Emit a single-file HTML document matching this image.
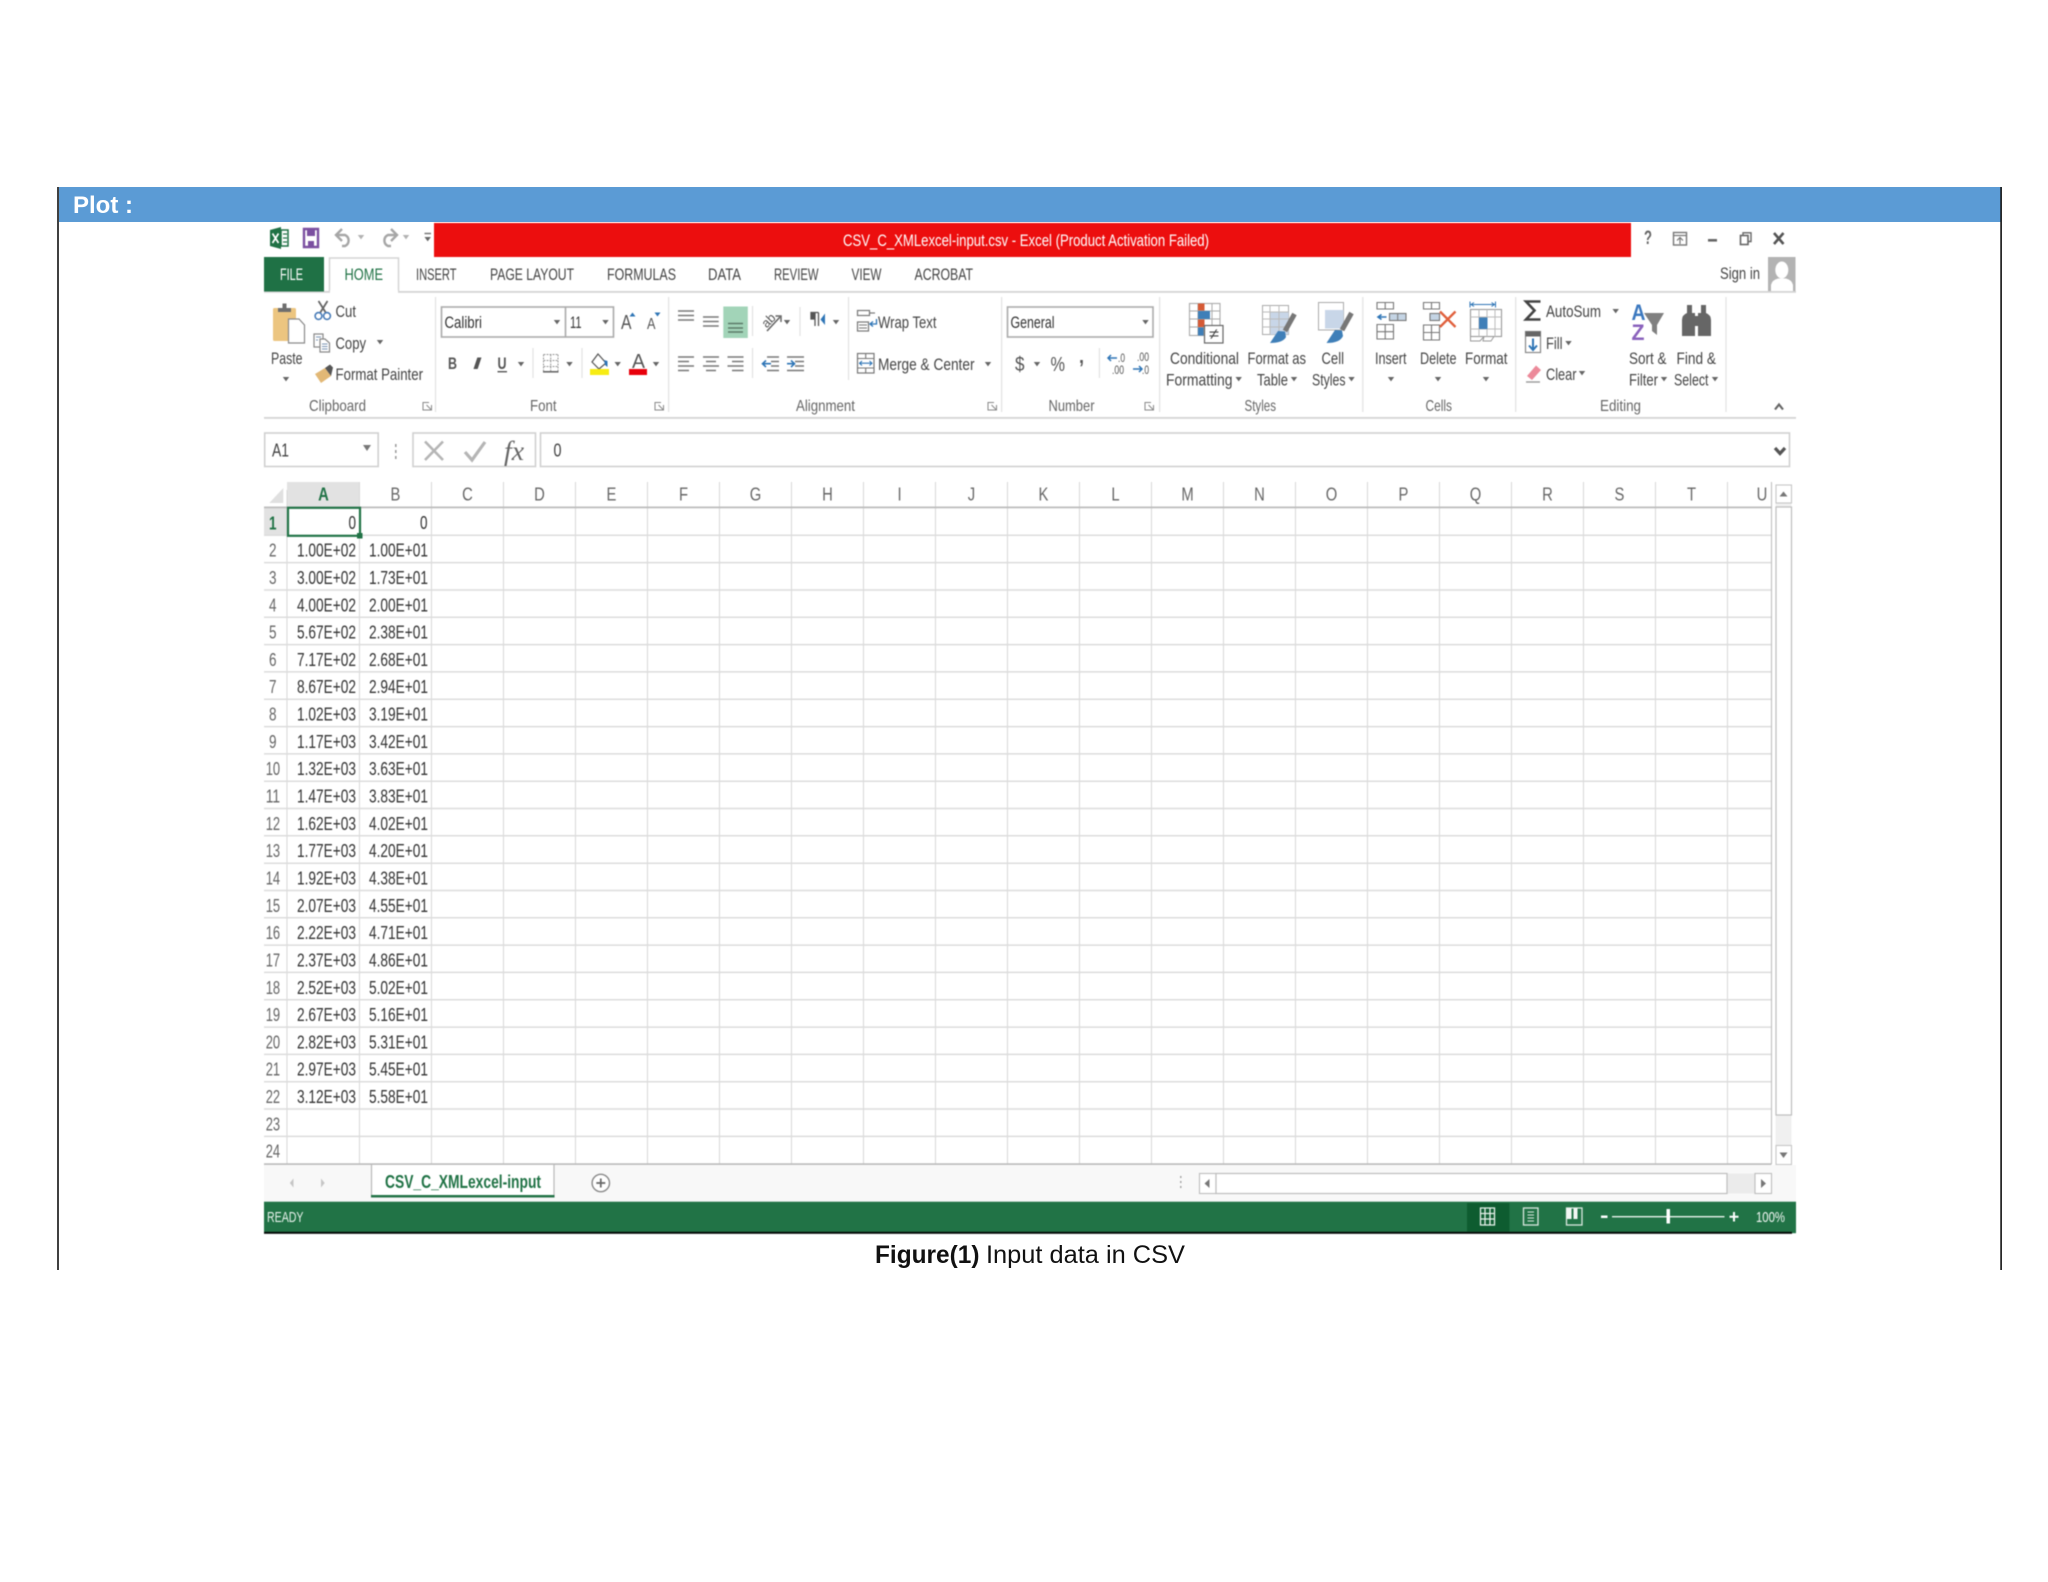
<!DOCTYPE html>
<html lang="en">
<head>
<meta charset="utf-8">
<title>Plot - Input data in CSV</title>
<style>
html,body{margin:0;padding:0;background:#fff}
svg{display:block}
text{font-family:"Liberation Sans",sans-serif;fill:#444}
.t{font-size:17px}
.g{font-size:16px;fill:#666}
.c{font-size:18.5px;fill:#333}
.r{font-size:18px;fill:#666}
.h{font-size:18.5px;fill:#666;text-anchor:middle}
.ln{fill:none;stroke:#777;stroke-width:1.6}
.bx{fill:#fff;stroke:#8c8c8c;stroke-width:1.5}
</style>
</head>
<body>
<svg xmlns="http://www.w3.org/2000/svg" width="2048" height="1582" viewBox="0 0 2048 1582">
<defs>
<path id="da" d="M-3.2-2H3.2L0 2.4Z" fill="#666"/>
</defs>
<rect width="2048" height="1582" fill="#fff"/>
<rect x="59" y="187" width="1942" height="35" fill="#5b9bd5"/>
<rect x="57.2" y="187" width="1.6" height="1083" fill="#111"/>
<rect x="2000.3" y="187" width="1.6" height="1083" fill="#111"/>
<text x="73" y="213" textLength="60" lengthAdjust="spacingAndGlyphs" style="font-size:24px;font-weight:bold;fill:#fff">Plot :</text>

<g style="filter:blur(.45px)">
<!-- title bar -->
<rect x="434" y="223" width="1197" height="34" fill="#ec0e0e"/>
<text x="843" y="246" textLength="366" lengthAdjust="spacingAndGlyphs" style="font-size:17px;fill:#fff">CSV_C_XMLexcel-input.csv - Excel (Product Activation Failed)</text>
<!-- excel icon -->
<path d="M270 230 281 227V249L270 246Z" fill="#1f7145"/>
<path d="M281 230H288V246H281Z" fill="#fff" stroke="#1f7145" stroke-width="1.5"/>
<path d="M283 234H287M283 238H287M283 242H287" stroke="#1f7145" stroke-width="1.2"/>
<path d="M272.5 233.5 278.5 243M278.5 233.5 272.5 243" stroke="#fff" stroke-width="1.7"/>
<!-- save -->
<path d="M304 229H318V247H304Z" fill="#fff" stroke="#7b4fa0" stroke-width="2.4"/>
<rect x="307" y="229" width="8" height="7" fill="#7b4fa0"/>
<rect x="308" y="241" width="6" height="6" fill="#7b4fa0"/>
<!-- undo/redo -->
<path d="M337 235H345A6 6 0 0 1 345 246H342" fill="none" stroke="#a6a6a6" stroke-width="2.4"/>
<path d="M342 229 336 235 342 241" fill="none" stroke="#a6a6a6" stroke-width="2.4"/>
<use href="#da" x="361" y="237" opacity=".5"/>
<path d="M396 235H388A6 6 0 0 0 388 246H391" fill="none" stroke="#a6a6a6" stroke-width="2.4"/>
<path d="M391 229 397 235 391 241" fill="none" stroke="#a6a6a6" stroke-width="2.4"/>
<use href="#da" x="406" y="237" opacity=".5"/>
<path d="M424.5 233.5H431" stroke="#777" stroke-width="1.5"/>
<use href="#da" x="427.7" y="239"/>
<!-- window controls -->
<text x="1644" y="244" textLength="8" lengthAdjust="spacingAndGlyphs" style="font-size:19px;font-weight:bold;fill:#666">?</text>
<rect x="1673.5" y="232.5" width="13" height="12.5" fill="none" stroke="#777" stroke-width="1.4"/>
<path d="M1673.5 235.5H1686.5M1680 244V238M1677 240.5 1680 237.5 1683 240.5" fill="none" stroke="#777" stroke-width="1.2"/>
<rect x="1708" y="239" width="9" height="2.6" fill="#666"/>
<path d="M1743 235V232.8H1751V241.5H1748" fill="none" stroke="#666" stroke-width="1.4"/>
<rect x="1740.5" y="235.5" width="7.5" height="9" fill="#fff" stroke="#666" stroke-width="1.6"/>
<path d="M1774 233 1783.5 244M1783.5 233 1774 244" stroke="#555" stroke-width="2.6"/>

<!-- tabs -->
<rect x="264" y="291" width="1532" height="1.8" fill="#d4d4d4"/>
<rect x="264" y="257" width="60" height="34.5" fill="#1f7145"/>
<path d="M329.5 292V258H398.5V292" fill="#fff" stroke="#d4d4d4" stroke-width="1.5"/>
<rect x="330" y="290" width="68" height="3" fill="#fff"/>
<text class="t" x="280" y="280" textLength="23" lengthAdjust="spacingAndGlyphs" style="fill:#fff">FILE</text>
<text class="t" x="344.5" y="280" textLength="38.5" lengthAdjust="spacingAndGlyphs" style="fill:#217346">HOME</text>
<text class="t" x="416" y="280" textLength="40.5" lengthAdjust="spacingAndGlyphs">INSERT</text>
<text class="t" x="490" y="280" textLength="84" lengthAdjust="spacingAndGlyphs">PAGE LAYOUT</text>
<text class="t" x="607" y="280" textLength="69" lengthAdjust="spacingAndGlyphs">FORMULAS</text>
<text class="t" x="708" y="280" textLength="33" lengthAdjust="spacingAndGlyphs">DATA</text>
<text class="t" x="774" y="280" textLength="44.5" lengthAdjust="spacingAndGlyphs">REVIEW</text>
<text class="t" x="851.5" y="280" textLength="30" lengthAdjust="spacingAndGlyphs">VIEW</text>
<text class="t" x="914.5" y="280" textLength="58.5" lengthAdjust="spacingAndGlyphs">ACROBAT</text>
<text class="t" x="1720" y="279" textLength="40" lengthAdjust="spacingAndGlyphs">Sign in</text>
<rect x="1768" y="257" width="27.5" height="34" fill="#b3b3b3"/>
<ellipse cx="1781.8" cy="270" rx="6.5" ry="8.5" fill="#fff"/>
<path d="M1771 291V285Q1772 280 1778 278.5H1786Q1792 280 1793 285V291Z" fill="#fff"/>

<!-- ribbon separators -->
<path d="M435.5 297V412M668.6 297V412M1001.6 297V412M1159.6 297V412M1362.8 297V412M1515.7 297V412M1726 297V412" stroke="#e2e2e2" stroke-width="1.2"/>
<path d="M533 348V378M582 348V378M752.5 348V378M752.5 306V336M800 307V336M848.5 297V380M1099.4 348V378" stroke="#e2e2e2" stroke-width="1.2"/>
<rect x="264" y="417" width="1532" height="1.8" fill="#d4d4d4"/>

<!-- clipboard -->
<rect x="273" y="308" width="23" height="33" rx="1.5" fill="#ecc580"/>
<path d="M278 312V308H282.5V303.5H286.5V308H291V312Z" fill="#6e6e6e"/>
<path d="M288.5 319H299L304.5 325V343H288.5Z" fill="#fff" stroke="#8a8a8a" stroke-width="1.2"/>
<text class="t" x="271" y="364" textLength="31.5" lengthAdjust="spacingAndGlyphs">Paste</text>
<use href="#da" x="286" y="379"/>
<path d="M318.5 301 326 313M327.5 301 320 313" stroke="#666" stroke-width="1.8"/>
<circle cx="318.5" cy="316" r="3.4" fill="none" stroke="#4a7db8" stroke-width="1.6"/>
<circle cx="327" cy="316" r="3.4" fill="none" stroke="#4a7db8" stroke-width="1.6"/>
<text class="t" x="335.5" y="317" textLength="20.5" lengthAdjust="spacingAndGlyphs">Cut</text>
<rect x="314" y="334" width="9" height="13" fill="#fff" stroke="#888" stroke-width="1.2"/>
<path d="M320 339H325L329.5 343V352H320Z" fill="#fff" stroke="#888" stroke-width="1.2"/>
<path d="M322 344H327.5M322 346.5H327.5M322 349H327.5M316 337H321M316 340H318" stroke="#7a93b4" stroke-width="1"/>
<text class="t" x="335.5" y="349" textLength="30.5" lengthAdjust="spacingAndGlyphs">Copy</text>
<use href="#da" x="380" y="342"/>
<path d="M315 374 325 368 331 376 321 383Z" fill="#e2b876"/>
<path d="M325 368 330 364.5 333 367.5 331 376Z" fill="#555"/>
<text class="t" x="335.5" y="380" textLength="87.5" lengthAdjust="spacingAndGlyphs">Format Painter</text>
<text class="g" x="309" y="411" textLength="57" lengthAdjust="spacingAndGlyphs">Clipboard</text>
<path d="M429 402.5H423V410H431.5V405M426.5 405 431.5 410" fill="none" stroke="#888" stroke-width="1"/>

<!-- font -->
<rect x="441.5" y="307" width="172" height="30" fill="#fff" stroke="#ababab" stroke-width="1.6"/>
<path d="M565.5 307V337" stroke="#ababab" stroke-width="1.6"/>
<text class="t" x="444.5" y="328" textLength="37.5" lengthAdjust="spacingAndGlyphs" style="fill:#333">Calibri</text>
<use href="#da" x="557" y="322"/>
<text class="t" x="570" y="328" textLength="11.5" lengthAdjust="spacingAndGlyphs" style="fill:#333">11</text>
<use href="#da" x="605.5" y="322"/>
<text x="621" y="329" textLength="10.5" lengthAdjust="spacingAndGlyphs" style="font-size:20px;fill:#555">A</text>
<path d="M629.5 316.5 632.5 312.5 635.5 316.5Z" fill="#2e75b6"/>
<text x="647" y="329" textLength="8.5" lengthAdjust="spacingAndGlyphs" style="font-size:16px;fill:#555">A</text>
<path d="M654.5 312.5H660.5L657.5 316.5Z" fill="#2e75b6"/>
<text x="448" y="369" textLength="9" lengthAdjust="spacingAndGlyphs" style="font-size:17px;font-weight:bold;fill:#555">B</text>
<text x="473" y="369" textLength="8" lengthAdjust="spacingAndGlyphs" style="font-size:17px;font-weight:bold;font-style:italic;fill:#555">I</text>
<text x="497.5" y="369" textLength="9" lengthAdjust="spacingAndGlyphs" style="font-size:17px;font-weight:bold;fill:#555">U</text>
<rect x="497.5" y="371" width="9.5" height="1.4" fill="#555"/>
<use href="#da" x="521" y="364"/>
<path d="M543.5 354.5H558M543.5 360.5H558M543.5 366.5H558M543.5 354.5V372M550.7 354.5V372M558 354.5V372" fill="none" stroke="#9a9a9a" stroke-width="1" stroke-dasharray="2 1"/>
<rect x="543" y="371" width="15.5" height="1.6" fill="#666"/>
<use href="#da" x="569.5" y="364"/>
<path d="M598 354 606 363 599 369 592 362Z" fill="#fff" stroke="#555" stroke-width="1.2"/>
<path d="M604 360 607.5 361V367L605 365Z" fill="#2e75b6"/>
<rect x="590" y="369" width="19" height="6" fill="#f7ec13"/>
<use href="#da" x="617.7" y="364"/>
<text x="632" y="368" textLength="13" lengthAdjust="spacingAndGlyphs" style="font-size:20px;fill:#555">A</text>
<rect x="629" y="369" width="18" height="6" fill="#e8000b"/>
<use href="#da" x="656" y="364"/>
<text class="g" x="530" y="411" textLength="26.5" lengthAdjust="spacingAndGlyphs">Font</text>
<path d="M661 402.5H655V410H663.5V405M658.5 405 663.5 410" fill="none" stroke="#888" stroke-width="1"/>

<!-- alignment -->
<rect x="723.3" y="306.5" width="24.5" height="31.5" fill="#a2d4b8"/>
<path d="M678 311H694M678 315.5H694M678 320H694M703 317H718.7M703 321.5H718.7M703 326H718.7" class="ln"/>
<path d="M728 323.5H743M728 328H743M728 332H743" fill="none" stroke="#5c7a68" stroke-width="1.6"/>
<path d="M678 357H694M678 361.5H689M678 366H694M678 370.5H689M703 357H719M706 361.5H716M703 366H719M706 370.5H716M727.5 357H743.5M732 361.5H743.5M727.5 366H743.5M732 370.5H743.5" class="ln"/>
<path d="M767 331 780 317" stroke="#666" stroke-width="1.6"/>
<path d="M775.5 316H781V322" fill="none" stroke="#666" stroke-width="1.5"/>
<text x="761" y="325" transform="rotate(-45 768 320)" textLength="14" lengthAdjust="spacingAndGlyphs" style="font-size:13px;fill:#555">ab</text>
<use href="#da" x="787" y="322"/>
<path d="M815 312.5H811V319H815ZM815 312.5V326M818.5 312.5V326M815 312.5H818.5" fill="#555" stroke="#555" stroke-width="1.3"/>
<path d="M825 313.5V325L820.5 319.5Z" fill="#2e75b6"/>
<use href="#da" x="836" y="322"/>
<rect x="857.5" y="310.5" width="12" height="5" fill="none" stroke="#777" stroke-width="1.2"/>
<path d="M869.5 313H875" stroke="#777" stroke-width="1.2"/>
<rect x="857.5" y="322" width="11" height="9" fill="none" stroke="#777" stroke-width="1.2"/>
<path d="M859 325H867M859 328H867" stroke="#777" stroke-width="1"/>
<path d="M876.5 319V324H870M873 321.5 870 324 873 326.5" fill="none" stroke="#2e75b6" stroke-width="1.3"/>
<text class="t" x="878" y="328" textLength="58.5" lengthAdjust="spacingAndGlyphs">Wrap Text</text>
<rect x="857.5" y="353.5" width="16.5" height="19.5" fill="#fff" stroke="#777" stroke-width="1.2"/>
<path d="M857.5 358.5H874M857.5 368H874M865.7 353.5V358.5M865.7 368V373" fill="none" stroke="#777" stroke-width="1.1"/>
<path d="M860 363.2H871.5M862 361 859.5 363.2 862 365.5M869.5 361 872 363.2 869.5 365.5" fill="none" stroke="#2e75b6" stroke-width="1.1"/>
<text class="t" x="878" y="370" textLength="96.5" lengthAdjust="spacingAndGlyphs">Merge &amp; Center</text>
<use href="#da" x="988" y="364"/>
<path d="M767 357H779M771 361.5H779M771 366H779M767 370.5H779M787 370.5H804M795 357H804M795 361.5H804M795 366H804M787 357H804" class="ln"/>
<path d="M771 363.7H763M766 360.5 762.5 363.7 766 367M787 363.7H794M791 360.5 794.5 363.7 791 367" fill="none" stroke="#2e75b6" stroke-width="1.6"/>
<text class="g" x="796" y="411" textLength="59" lengthAdjust="spacingAndGlyphs">Alignment</text>
<path d="M994 402.5H988V410H996.5V405M991.5 405 996.5 410" fill="none" stroke="#888" stroke-width="1"/>

<!-- number -->
<rect x="1007.5" y="307" width="145.5" height="30" fill="#fff" stroke="#ababab" stroke-width="1.6"/>
<text class="t" x="1010.5" y="328" textLength="44" lengthAdjust="spacingAndGlyphs" style="fill:#333">General</text>
<use href="#da" x="1145.5" y="322"/>
<text x="1015" y="371" textLength="9.5" lengthAdjust="spacingAndGlyphs" style="font-size:20px;fill:#555">$</text>
<use href="#da" x="1037" y="364"/>
<text x="1050.5" y="371" textLength="14.5" lengthAdjust="spacingAndGlyphs" style="font-size:20px;fill:#555">%</text>
<text x="1079" y="363" textLength="5" lengthAdjust="spacingAndGlyphs" style="font-size:20px;font-weight:bold;fill:#555">,</text>
<path d="M1117 358H1108M1111 355 1108 358 1111 361" fill="none" stroke="#2e75b6" stroke-width="1.5"/>
<text x="1118" y="362" textLength="7" lengthAdjust="spacingAndGlyphs" style="font-size:12px;fill:#555">.0</text>
<text x="1112" y="374" textLength="12" lengthAdjust="spacingAndGlyphs" style="font-size:12px;fill:#555">.00</text>
<text x="1137" y="361" textLength="12" lengthAdjust="spacingAndGlyphs" style="font-size:12px;fill:#555">.00</text>
<path d="M1133 369H1142M1139 366 1142 369 1139 372" fill="none" stroke="#2e75b6" stroke-width="1.5"/>
<text x="1142" y="374" textLength="7" lengthAdjust="spacingAndGlyphs" style="font-size:12px;fill:#555">.0</text>
<text class="g" x="1048.5" y="411" textLength="46" lengthAdjust="spacingAndGlyphs">Number</text>
<path d="M1151 402.5H1145V410H1153.5V405M1148.5 405 1153.5 410" fill="none" stroke="#888" stroke-width="1"/>

<!-- styles -->
<rect x="1189.5" y="303.5" width="30.5" height="32" fill="#fff" stroke="#aaa" stroke-width="1.1"/>
<path d="M1189.5 311H1220M1189.5 319H1220M1189.5 327H1220M1198 303.5V335.5M1204 303.5V335.5M1212 303.5V335.5" stroke="#aaa" stroke-width="1"/>
<rect x="1198" y="303.5" width="6.5" height="7" fill="#d65a35"/>
<rect x="1198" y="311" width="12" height="8" fill="#3f7fb8"/>
<rect x="1198" y="319.5" width="6.5" height="7.5" fill="#d65a35"/>
<rect x="1198" y="327.5" width="5.5" height="8" fill="#3f7fb8"/>
<rect x="1204.5" y="325.5" width="18.5" height="17.5" fill="#fff" stroke="#666" stroke-width="1.2"/>
<text x="1209" y="339" textLength="10" lengthAdjust="spacingAndGlyphs" style="font-size:15px;fill:#444">≠</text>
<rect x="1262.5" y="305.5" width="26" height="29" fill="#fff" stroke="#aaa" stroke-width="1"/>
<rect x="1270" y="312" width="18.5" height="22.5" fill="#c8d6e8"/>
<path d="M1262.5 312H1288.5M1262.5 319H1288.5M1262.5 327H1288.5M1270 305.5V334.5M1279 305.5V334.5" stroke="#bbb" stroke-width="1"/>
<path d="M1294.5 314 1285 331" stroke="#777" stroke-width="5"/>
<path d="M1278 331 1285 331.5 1286 337Q1283 343 1270 343 1274 337 1278 331Z" fill="#3f7fb8"/>
<rect x="1318.5" y="302.5" width="25" height="27.5" fill="#fff" stroke="#aaa" stroke-width="1"/>
<rect x="1325" y="310" width="18.5" height="18.5" fill="#c8d6e8"/>
<path d="M1351.5 313 1342 330" stroke="#777" stroke-width="5"/>
<path d="M1335 330 1342 330.5 1343 336Q1340 343 1326.5 343 1331 336 1335 330Z" fill="#3f7fb8"/>
<text class="t" x="1170" y="364" textLength="69" lengthAdjust="spacingAndGlyphs">Conditional</text>
<text class="t" x="1166" y="385.5" textLength="66.5" lengthAdjust="spacingAndGlyphs">Formatting</text>
<use href="#da" x="1238.7" y="379"/>
<text class="t" x="1247.5" y="364" textLength="58.5" lengthAdjust="spacingAndGlyphs">Format as</text>
<text class="t" x="1257" y="385.5" textLength="31" lengthAdjust="spacingAndGlyphs">Table</text>
<use href="#da" x="1294" y="379"/>
<text class="t" x="1321.5" y="364" textLength="22.5" lengthAdjust="spacingAndGlyphs">Cell</text>
<text class="t" x="1312" y="385.5" textLength="33.5" lengthAdjust="spacingAndGlyphs">Styles</text>
<use href="#da" x="1351.5" y="379"/>
<text class="g" x="1244.5" y="411" textLength="31.5" lengthAdjust="spacingAndGlyphs">Styles</text>

<!-- cells -->
<path d="M1377 302.5H1393.5V309H1377ZM1385.2 302.5V309M1377 324.5H1393.5V339H1377ZM1377 331.7H1393.5M1385.2 324.5V339" fill="#fff" stroke="#777" stroke-width="1.1"/>
<rect x="1389.5" y="313.5" width="16.5" height="7" fill="#c4d4e4" stroke="#777" stroke-width="1.1"/>
<path d="M1397.7 313.5V320.5" stroke="#777" stroke-width="1"/>
<path d="M1386.5 317H1378.5M1381.5 314.5 1378 317 1381.5 319.5" fill="none" stroke="#2e75b6" stroke-width="1.6"/>
<path d="M1423.5 302.5H1439.5V309H1423.5ZM1431.5 302.5V309M1423.5 325H1439.5V340H1423.5ZM1423.5 332.5H1439.5M1431.5 325V340" fill="#fff" stroke="#777" stroke-width="1.1"/>
<rect x="1430" y="313.5" width="9.5" height="7" fill="#c4d4e4" stroke="#777" stroke-width="1.1"/>
<path d="M1440 311.5 1455.5 327M1455.5 311.5 1440 327" stroke="#e0603c" stroke-width="2.3"/>
<path d="M1470 304.5H1495.5M1470 301.5V307.5M1495.5 301.5V307.5" stroke="#2e75b6" stroke-width="1"/>
<path d="M1474 302.5 1471 304.5 1474 306.5M1491.5 302.5 1494.5 304.5 1491.5 306.5" fill="none" stroke="#2e75b6" stroke-width="1"/>
<rect x="1470.5" y="309.5" width="31" height="27" fill="#fff" stroke="#999" stroke-width="1.1"/>
<path d="M1470.5 317H1501.5M1470.5 329H1501.5M1479 309.5V336.5M1487 309.5V336.5M1495 309.5V336.5" stroke="#bbb" stroke-width="1"/>
<rect x="1479" y="317.5" width="8.5" height="11.5" fill="#3f7fb8"/>
<path d="M1470.5 336.5V341H1480L1484 336.5M1484 336.5 1483 341H1491L1494 336.5" fill="none" stroke="#999" stroke-width="1"/>
<text class="t" x="1375" y="364" textLength="31.5" lengthAdjust="spacingAndGlyphs">Insert</text>
<use href="#da" x="1391" y="379"/>
<text class="t" x="1420" y="364" textLength="36.5" lengthAdjust="spacingAndGlyphs">Delete</text>
<use href="#da" x="1438" y="379"/>
<text class="t" x="1465" y="364" textLength="42.5" lengthAdjust="spacingAndGlyphs">Format</text>
<use href="#da" x="1486" y="379"/>
<text class="g" x="1425.5" y="411" textLength="26.5" lengthAdjust="spacingAndGlyphs">Cells</text>

<!-- editing -->
<path d="M1540.5 301.5H1526L1534.5 310.5 1526 319.5H1540.5" fill="none" stroke="#444" stroke-width="2.6"/>
<text class="t" x="1546" y="317" textLength="55" lengthAdjust="spacingAndGlyphs">AutoSum</text>
<use href="#da" x="1615.7" y="311"/>
<rect x="1525.5" y="331.5" width="15" height="21" fill="#fff" stroke="#888" stroke-width="1.2"/>
<rect x="1525.5" y="331.5" width="15" height="5" fill="#666"/>
<path d="M1533 338.5V350M1529 345.5 1533 350 1537 345.5" fill="none" stroke="#2e75b6" stroke-width="2"/>
<text class="t" x="1546" y="349" textLength="16.5" lengthAdjust="spacingAndGlyphs">Fill</text>
<use href="#da" x="1568.5" y="343"/>
<path d="M1527 376 1536 365.5 1541 370 1532 380Z" fill="#ec8a9a"/>
<path d="M1526 382H1540" stroke="#999" stroke-width="1.4"/>
<text class="t" x="1546" y="380" textLength="30.5" lengthAdjust="spacingAndGlyphs">Clear</text>
<use href="#da" x="1582" y="373"/>
<text x="1631.5" y="320" textLength="14" lengthAdjust="spacingAndGlyphs" style="font-size:22px;fill:#3b78bf;font-weight:bold">A</text>
<text x="1631.5" y="340" textLength="13" lengthAdjust="spacingAndGlyphs" style="font-size:22px;fill:#8a62bc;font-weight:bold">Z</text>
<path d="M1644 313H1664L1657 325V335L1652 331V325Z" fill="#808080"/>
<path d="M1687 305H1692V313H1695V336H1682V320Q1682 315 1687 313ZM1706 305H1701V313H1698V336H1711V320Q1711 315 1706 313ZM1695 316H1698V326H1695Z" fill="#666"/>
<text class="t" x="1629" y="364" textLength="37.5" lengthAdjust="spacingAndGlyphs">Sort &amp;</text>
<text class="t" x="1629" y="385.5" textLength="29" lengthAdjust="spacingAndGlyphs">Filter</text>
<use href="#da" x="1664" y="379"/>
<text class="t" x="1676.5" y="364" textLength="39.5" lengthAdjust="spacingAndGlyphs">Find &amp;</text>
<text class="t" x="1674" y="385.5" textLength="34.5" lengthAdjust="spacingAndGlyphs">Select</text>
<use href="#da" x="1715" y="379"/>
<text class="g" x="1600" y="411" textLength="41" lengthAdjust="spacingAndGlyphs">Editing</text>
<path d="M1775 409.5 1779 404.5 1783 409.5" fill="none" stroke="#666" stroke-width="2.2"/>

<!-- formula bar -->
<rect x="264.7" y="433" width="113.5" height="33.5" fill="#fff" stroke="#d0d0d0" stroke-width="1.6"/>
<text class="t" x="272" y="456.5" textLength="17" lengthAdjust="spacingAndGlyphs" style="font-size:18px">A1</text>
<path d="M363 445H371L367 451Z" fill="#777"/>
<path d="M395.8 444V447M395.8 450V453M395.8 456V459" stroke="#999" stroke-width="1.5"/>
<rect x="413" y="433" width="122.5" height="33.5" fill="#fff" stroke="#d0d0d0" stroke-width="1.6"/>
<path d="M425 441.5 443 460M443 441.5 425 460" stroke="#b5b5b5" stroke-width="2.6"/>
<path d="M465 452 472 460 485 442" fill="none" stroke="#b5b5b5" stroke-width="3.2"/>
<text x="504" y="460" textLength="20" lengthAdjust="spacingAndGlyphs" style="font-size:27px;font-family:'Liberation Serif',serif;font-style:italic;fill:#666">fx</text>
<rect x="540.5" y="433" width="1249" height="33.5" fill="#fff" stroke="#d0d0d0" stroke-width="1.6"/>
<text class="t" x="553.5" y="456.5" textLength="8" lengthAdjust="spacingAndGlyphs" style="font-size:18px">0</text>
<path d="M1775 448 1780 453.5 1785 448" fill="none" stroke="#555" stroke-width="3.2"/>

<!-- grid -->
<rect x="287" y="482" width="72.5" height="25.5" fill="#e2e2e2"/>
<rect x="264" y="507.5" width="23" height="28" fill="#e2e2e2"/>
<path d="M283.3 488V503H269.3Z" fill="#e0e0e0"/>
<path d="M287 490V1164M359.5 482V1164M431.5 482V1164M503.5 482V1164M575.5 482V1164M647.5 482V1164M719.5 482V1164M791.5 482V1164M863.5 482V1164M935.5 482V1164M1007.5 482V1164M1079.5 482V1164M1151.5 482V1164M1223.5 482V1164M1295.5 482V1164M1367.5 482V1164M1439.5 482V1164M1511.5 482V1164M1583.5 482V1164M1655.5 482V1164M1727.5 482V1164" stroke="#d9d9d9" stroke-width="1.1"/>
<path d="M264 535.3H1771M264 562.6H1771M264 590H1771M264 617.3H1771M264 644.6H1771M264 671.9H1771M264 699.2H1771M264 726.6H1771M264 753.9H1771M264 781.2H1771M264 808.5H1771M264 835.8H1771M264 863.2H1771M264 890.5H1771M264 917.8H1771M264 945.1H1771M264 972.4H1771M264 999.8H1771M264 1027.1H1771M264 1054.4H1771M264 1081.7H1771M264 1109H1771M264 1136.4H1771" stroke="#dcdcdc" stroke-width="1.5"/>
<rect x="264" y="506.5" width="1507" height="1.8" fill="#bdbdbd"/>
<path d="M1771.5 482V1164" stroke="#bfbfbf" stroke-width="1.1"/>
<rect x="288" y="507.8" width="72" height="28" fill="#fff" stroke="#217346" stroke-width="2.2"/>
<rect x="357" y="533" width="5.5" height="5.5" fill="#217346"/>

<text class="h" transform="translate(323.5 500.7) scale(.8 1)" style="fill:#217346;font-weight:bold">A</text>
<text class="h" transform="translate(395.5 500.7) scale(.8 1)">B</text>
<text class="h" transform="translate(467.5 500.7) scale(.8 1)">C</text>
<text class="h" transform="translate(539.5 500.7) scale(.8 1)">D</text>
<text class="h" transform="translate(611.5 500.7) scale(.8 1)">E</text>
<text class="h" transform="translate(683.5 500.7) scale(.8 1)">F</text>
<text class="h" transform="translate(755.5 500.7) scale(.8 1)">G</text>
<text class="h" transform="translate(827.5 500.7) scale(.8 1)">H</text>
<text class="h" transform="translate(899.5 500.7) scale(.8 1)">I</text>
<text class="h" transform="translate(971.5 500.7) scale(.8 1)">J</text>
<text class="h" transform="translate(1043.5 500.7) scale(.8 1)">K</text>
<text class="h" transform="translate(1115.5 500.7) scale(.8 1)">L</text>
<text class="h" transform="translate(1187.5 500.7) scale(.8 1)">M</text>
<text class="h" transform="translate(1259.5 500.7) scale(.8 1)">N</text>
<text class="h" transform="translate(1331.5 500.7) scale(.8 1)">O</text>
<text class="h" transform="translate(1403.5 500.7) scale(.8 1)">P</text>
<text class="h" transform="translate(1475.5 500.7) scale(.8 1)">Q</text>
<text class="h" transform="translate(1547.5 500.7) scale(.8 1)">R</text>
<text class="h" transform="translate(1619.5 500.7) scale(.8 1)">S</text>
<text class="h" transform="translate(1691.5 500.7) scale(.8 1)">T</text>
<text class="h" transform="translate(1762 500.7) scale(.8 1)">U</text>

<g transform="translate(0 -1)">
<text class="r" x="269" y="530.3" textLength="7.5" lengthAdjust="spacingAndGlyphs" style="fill:#217346;font-weight:bold">1</text>
<text class="r" x="269" y="557.6" textLength="7.5" lengthAdjust="spacingAndGlyphs">2</text>
<text class="r" x="269" y="585" textLength="7.5" lengthAdjust="spacingAndGlyphs">3</text>
<text class="r" x="269" y="612.3" textLength="7.5" lengthAdjust="spacingAndGlyphs">4</text>
<text class="r" x="269" y="639.6" textLength="7.5" lengthAdjust="spacingAndGlyphs">5</text>
<text class="r" x="269" y="666.9" textLength="7.5" lengthAdjust="spacingAndGlyphs">6</text>
<text class="r" x="269" y="694.2" textLength="7.5" lengthAdjust="spacingAndGlyphs">7</text>
<text class="r" x="269" y="721.6" textLength="7.5" lengthAdjust="spacingAndGlyphs">8</text>
<text class="r" x="269" y="748.9" textLength="7.5" lengthAdjust="spacingAndGlyphs">9</text>
<text class="r" x="265.7" y="776.2" textLength="14.4" lengthAdjust="spacingAndGlyphs">10</text>
<text class="r" x="265.7" y="803.5" textLength="14.4" lengthAdjust="spacingAndGlyphs">11</text>
<text class="r" x="265.7" y="830.8" textLength="14.4" lengthAdjust="spacingAndGlyphs">12</text>
<text class="r" x="265.7" y="858.2" textLength="14.4" lengthAdjust="spacingAndGlyphs">13</text>
<text class="r" x="265.7" y="885.5" textLength="14.4" lengthAdjust="spacingAndGlyphs">14</text>
<text class="r" x="265.7" y="912.8" textLength="14.4" lengthAdjust="spacingAndGlyphs">15</text>
<text class="r" x="265.7" y="940.1" textLength="14.4" lengthAdjust="spacingAndGlyphs">16</text>
<text class="r" x="265.7" y="967.4" textLength="14.4" lengthAdjust="spacingAndGlyphs">17</text>
<text class="r" x="265.7" y="994.8" textLength="14.4" lengthAdjust="spacingAndGlyphs">18</text>
<text class="r" x="265.7" y="1022.1" textLength="14.4" lengthAdjust="spacingAndGlyphs">19</text>
<text class="r" x="265.7" y="1049.4" textLength="14.4" lengthAdjust="spacingAndGlyphs">20</text>
<text class="r" x="265.7" y="1076.7" textLength="14.4" lengthAdjust="spacingAndGlyphs">21</text>
<text class="r" x="265.7" y="1104" textLength="14.4" lengthAdjust="spacingAndGlyphs">22</text>
<text class="r" x="265.7" y="1131.4" textLength="14.4" lengthAdjust="spacingAndGlyphs">23</text>
<text class="r" x="265.7" y="1158.7" textLength="14.4" lengthAdjust="spacingAndGlyphs">24</text>

<text class="c" x="348.5" y="530" textLength="7.5" lengthAdjust="spacingAndGlyphs">0</text>
<text class="c" x="420" y="530" textLength="7.5" lengthAdjust="spacingAndGlyphs">0</text>
<text class="c" x="297" y="557.6" textLength="59" lengthAdjust="spacingAndGlyphs">1.00E+02</text><text class="c" x="369" y="557.6" textLength="59" lengthAdjust="spacingAndGlyphs">1.00E+01</text>
<text class="c" x="297" y="585" textLength="59" lengthAdjust="spacingAndGlyphs">3.00E+02</text><text class="c" x="369" y="585" textLength="59" lengthAdjust="spacingAndGlyphs">1.73E+01</text>
<text class="c" x="297" y="612.3" textLength="59" lengthAdjust="spacingAndGlyphs">4.00E+02</text><text class="c" x="369" y="612.3" textLength="59" lengthAdjust="spacingAndGlyphs">2.00E+01</text>
<text class="c" x="297" y="639.6" textLength="59" lengthAdjust="spacingAndGlyphs">5.67E+02</text><text class="c" x="369" y="639.6" textLength="59" lengthAdjust="spacingAndGlyphs">2.38E+01</text>
<text class="c" x="297" y="666.9" textLength="59" lengthAdjust="spacingAndGlyphs">7.17E+02</text><text class="c" x="369" y="666.9" textLength="59" lengthAdjust="spacingAndGlyphs">2.68E+01</text>
<text class="c" x="297" y="694.2" textLength="59" lengthAdjust="spacingAndGlyphs">8.67E+02</text><text class="c" x="369" y="694.2" textLength="59" lengthAdjust="spacingAndGlyphs">2.94E+01</text>
<text class="c" x="297" y="721.6" textLength="59" lengthAdjust="spacingAndGlyphs">1.02E+03</text><text class="c" x="369" y="721.6" textLength="59" lengthAdjust="spacingAndGlyphs">3.19E+01</text>
<text class="c" x="297" y="748.9" textLength="59" lengthAdjust="spacingAndGlyphs">1.17E+03</text><text class="c" x="369" y="748.9" textLength="59" lengthAdjust="spacingAndGlyphs">3.42E+01</text>
<text class="c" x="297" y="776.2" textLength="59" lengthAdjust="spacingAndGlyphs">1.32E+03</text><text class="c" x="369" y="776.2" textLength="59" lengthAdjust="spacingAndGlyphs">3.63E+01</text>
<text class="c" x="297" y="803.5" textLength="59" lengthAdjust="spacingAndGlyphs">1.47E+03</text><text class="c" x="369" y="803.5" textLength="59" lengthAdjust="spacingAndGlyphs">3.83E+01</text>
<text class="c" x="297" y="830.8" textLength="59" lengthAdjust="spacingAndGlyphs">1.62E+03</text><text class="c" x="369" y="830.8" textLength="59" lengthAdjust="spacingAndGlyphs">4.02E+01</text>
<text class="c" x="297" y="858.2" textLength="59" lengthAdjust="spacingAndGlyphs">1.77E+03</text><text class="c" x="369" y="858.2" textLength="59" lengthAdjust="spacingAndGlyphs">4.20E+01</text>
<text class="c" x="297" y="885.5" textLength="59" lengthAdjust="spacingAndGlyphs">1.92E+03</text><text class="c" x="369" y="885.5" textLength="59" lengthAdjust="spacingAndGlyphs">4.38E+01</text>
<text class="c" x="297" y="912.8" textLength="59" lengthAdjust="spacingAndGlyphs">2.07E+03</text><text class="c" x="369" y="912.8" textLength="59" lengthAdjust="spacingAndGlyphs">4.55E+01</text>
<text class="c" x="297" y="940.1" textLength="59" lengthAdjust="spacingAndGlyphs">2.22E+03</text><text class="c" x="369" y="940.1" textLength="59" lengthAdjust="spacingAndGlyphs">4.71E+01</text>
<text class="c" x="297" y="967.4" textLength="59" lengthAdjust="spacingAndGlyphs">2.37E+03</text><text class="c" x="369" y="967.4" textLength="59" lengthAdjust="spacingAndGlyphs">4.86E+01</text>
<text class="c" x="297" y="994.8" textLength="59" lengthAdjust="spacingAndGlyphs">2.52E+03</text><text class="c" x="369" y="994.8" textLength="59" lengthAdjust="spacingAndGlyphs">5.02E+01</text>
<text class="c" x="297" y="1022.1" textLength="59" lengthAdjust="spacingAndGlyphs">2.67E+03</text><text class="c" x="369" y="1022.1" textLength="59" lengthAdjust="spacingAndGlyphs">5.16E+01</text>
<text class="c" x="297" y="1049.4" textLength="59" lengthAdjust="spacingAndGlyphs">2.82E+03</text><text class="c" x="369" y="1049.4" textLength="59" lengthAdjust="spacingAndGlyphs">5.31E+01</text>
<text class="c" x="297" y="1076.7" textLength="59" lengthAdjust="spacingAndGlyphs">2.97E+03</text><text class="c" x="369" y="1076.7" textLength="59" lengthAdjust="spacingAndGlyphs">5.45E+01</text>
<text class="c" x="297" y="1104" textLength="59" lengthAdjust="spacingAndGlyphs">3.12E+03</text><text class="c" x="369" y="1104" textLength="59" lengthAdjust="spacingAndGlyphs">5.58E+01</text>
</g>

<!-- vertical scrollbar -->
<rect x="1775.5" y="503" width="16" height="642" fill="#f0f0f0"/>
<rect x="1776" y="485" width="15.5" height="18" fill="#fff" stroke="#c6c6c6" stroke-width="1.1"/>
<path d="M1779.5 496.5H1787.5L1783.5 491.5Z" fill="#777"/>
<rect x="1776" y="507" width="15.5" height="608" fill="#fff" stroke="#bdbdbd" stroke-width="1.2"/>
<rect x="1776" y="1145.5" width="15.5" height="19" fill="#fff" stroke="#c6c6c6" stroke-width="1.1"/>
<path d="M1779.5 1152.5H1787.5L1783.5 1158Z" fill="#777"/>

<!-- sheet tabs -->
<rect x="264" y="1165" width="1532" height="37" fill="#f8f8f8"/>
<rect x="264" y="1163.3" width="1507.5" height="1.6" fill="#b9b9b9"/>
<path d="M371.5 1197V1164.3H554V1197Z" fill="#fff" stroke="#b9b9b9" stroke-width="1.2"/>
<rect x="371" y="1195" width="183.5" height="2.4" fill="#217346"/>
<text x="385" y="1188" textLength="156" lengthAdjust="spacingAndGlyphs" style="font-size:18px;font-weight:bold;fill:#217346">CSV_C_XMLexcel-input</text>
<path d="M293.5 1178.5 289.8 1183 293.5 1187.5ZM321 1178.5 324.7 1183 321 1187.5Z" fill="#c6c6c6"/>
<circle cx="600.8" cy="1183" r="8.7" fill="#fff" stroke="#8a8a8a" stroke-width="1.4"/>
<path d="M596.3 1183H605.3M600.8 1178.5V1187.5" stroke="#666" stroke-width="1.7"/>

<!-- horizontal scrollbar -->
<path d="M1180.8 1176V1178M1180.8 1181V1183M1180.8 1186V1188" stroke="#999" stroke-width="1.3"/>
<rect x="1727" y="1173.5" width="28" height="20" fill="#ebebeb"/>
<rect x="1199.5" y="1173.5" width="16.5" height="20" fill="#fff" stroke="#bdbdbd" stroke-width="1.1"/>
<path d="M1209.5 1179V1188L1204.5 1183.5Z" fill="#777"/>
<rect x="1216" y="1173.5" width="511" height="20" fill="#fff" stroke="#bdbdbd" stroke-width="1.2"/>
<rect x="1755" y="1173.5" width="16.5" height="20" fill="#fff" stroke="#bdbdbd" stroke-width="1.1"/>
<path d="M1761 1179V1188L1766 1183.5Z" fill="#777"/>

<!-- status bar -->
<rect x="264" y="1201.7" width="1532" height="31.5" fill="#217346"/>
<rect x="264" y="1231.8" width="1528" height="2" fill="#050a07"/>
<rect x="1467" y="1203" width="42.5" height="28.5" fill="#0e5c30"/>
<text x="267" y="1222" textLength="36.5" lengthAdjust="spacingAndGlyphs" style="font-size:15px;fill:#e8f2ec">READY</text>
<path d="M1480.5 1208H1494.5V1225H1480.5ZM1480.5 1213.5H1494.5M1480.5 1219H1494.5M1485 1208V1225M1490 1208V1225" fill="none" stroke="#e8f2ec" stroke-width="1.3"/>
<rect x="1523.5" y="1208" width="14.5" height="17" fill="none" stroke="#dbe8e0" stroke-width="1.3"/>
<path d="M1527.5 1212H1534M1527.5 1215H1534M1527.5 1218H1534M1527.5 1221H1534" stroke="#dbe8e0" stroke-width="1"/>
<rect x="1566.5" y="1208" width="15.5" height="17" fill="none" stroke="#dbe8e0" stroke-width="1.3"/>
<rect x="1566.5" y="1208" width="5" height="11" fill="#f2f7f4"/>
<rect x="1573.5" y="1208" width="4" height="11" fill="#f2f7f4"/>
<rect x="1601" y="1215.5" width="6.5" height="2.5" fill="#fff"/>
<rect x="1612" y="1216" width="112.5" height="1.4" fill="#e8f2ec"/>
<rect x="1666.5" y="1209" width="3.5" height="14.5" fill="#fff"/>
<path d="M1729.5 1216.7H1738.5M1734 1212V1221.5" stroke="#fff" stroke-width="2"/>
<text x="1756" y="1222" textLength="29" lengthAdjust="spacingAndGlyphs" style="font-size:15px;fill:#f2f7f4">100%</text>
</g>

<!-- caption -->
<text x="875" y="1263" textLength="104.5" lengthAdjust="spacingAndGlyphs" style="font-size:25px;font-weight:bold;fill:#111">Figure(1)</text>
<text x="986" y="1263" textLength="199" lengthAdjust="spacingAndGlyphs" style="font-size:25px;fill:#111">Input data in CSV</text>
</svg>
</body>
</html>
